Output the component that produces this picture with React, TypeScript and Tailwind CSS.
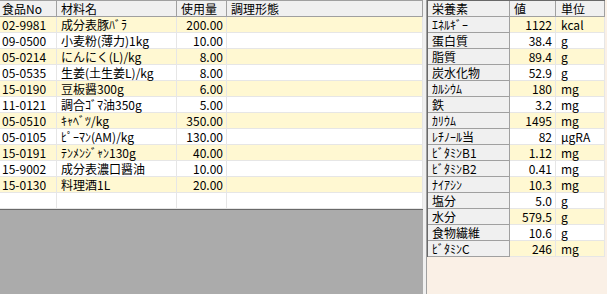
import React from 'react'

const materials = [
    ['02-9981', '成分表豚ﾊﾞﾗ', '200.00'],
    ['09-0500', '小麦粉(薄力)1kg', '10.00'],
    ['05-0214', 'にんにく(L)/kg', '8.00'],
    ['05-0535', '生姜(土生姜L)/kg', '8.00'],
    ['15-0190', '豆板醤300g', '6.00'],
    ['11-0121', '調合ｺﾞﾏ油350g', '5.00'],
    ['05-0510', 'ｷｬﾍﾞﾂ/kg', '350.00'],
    ['05-0105', 'ﾋﾟｰﾏﾝ(AM)/kg', '130.00'],
    ['15-0191', 'ﾃﾝﾒﾝｼﾞｬﾝ130g', '40.00'],
    ['15-9002', '成分表濃口醤油', '10.00'],
    ['15-0130', '料理酒1L', '20.00'],
    ['', '', ''],
]

const nutrients = [
    ['ｴﾈﾙｷﾞｰ', '1122', 'kcal'],
    ['蛋白質', '38.4', 'g'],
    ['脂質', '89.4', 'g'],
    ['炭水化物', '52.9', 'g'],
    ['ｶﾙｼｳﾑ', '180', 'mg'],
    ['鉄', '3.2', 'mg'],
    ['ｶﾘｳﾑ', '1495', 'mg'],
    ['ﾚﾁﾉｰﾙ当', '82', 'μgRA'],
    ['ﾋﾞﾀﾐﾝB1', '1.12', 'mg'],
    ['ﾋﾞﾀﾐﾝB2', '0.41', 'mg'],
    ['ﾅｲｱｼﾝ', '10.3', 'mg'],
    ['塩分', '5.0', 'g'],
    ['水分', '579.5', 'g'],
    ['食物繊維', '10.6', 'g'],
    ['ﾋﾞﾀﾐﾝC', '246', 'mg'],
]

const rowBg = (i: number) => (i % 2 === 0 ? 'bg-[#fff8d2]' : 'bg-white')

function MaterialGrid() {
    return (
        <div className="border-t border-[#a0a0a0] border-b border-b-[#696969] bg-white">
            <div className="grid h-[16px] grid-cols-[57px_120px_50px_1fr] bg-[#f0f0f0]">
                <div className="flex items-center border-r border-b border-[#a0a0a0] pl-[2px]">食品No</div>
                <div className="flex items-center border-r border-b border-[#a0a0a0] pl-[4px]">材料名</div>
                <div className="flex items-center border-r border-b border-[#a0a0a0] pl-[4px]">使用量</div>
                <div className="flex items-center border-r border-b border-[#a0a0a0] pl-[4px]">調理形態</div>
            </div>
            {materials.map((m, i) => (
                <div key={i} className={`grid h-[16px] grid-cols-[57px_120px_50px_1fr] ${rowBg(i)}`}>
                    <div className="flex items-center border-r border-b border-[#e6e6e6] pl-[2px]">{m[0]}</div>
                    <div className="flex items-center border-r border-b border-[#e6e6e6] pl-[4px] whitespace-nowrap">{m[1]}</div>
                    <div className="flex items-center justify-end border-r border-b border-[#e6e6e6] pr-[3px]">{m[2]}</div>
                    <div className="border-r border-b border-[#e6e6e6]" />
                </div>
            ))}
        </div>
    )
}

function NutrientGrid() {
    return (
        <div className="w-[178px] border-l border-t border-[#696969]">
            <div className="grid h-[16px] grid-cols-[82px_46px_49px] bg-[#f0f0f0]">
                <div className="flex items-center border-r border-b border-[#a0a0a0] pl-[4px]">栄養素</div>
                <div className="flex items-center border-r border-b border-[#a0a0a0] pl-[4px]">値</div>
                <div className="flex items-center border-r border-b border-[#a0a0a0] pl-[5px]">単位</div>
            </div>
            {nutrients.map((n, i) => (
                <div key={n[0]} className="grid h-[16px] grid-cols-[82px_46px_49px]">
                    <div className="flex items-center border-r border-b border-[#a0a0a0] bg-[#f0f0f0] pl-[4px] whitespace-nowrap">{n[0]}</div>
                    <div className={`flex items-center justify-end border-r border-b border-[#e6e6e6] pr-[3px] ${rowBg(i)}`}>{n[1]}</div>
                    <div className={`flex items-center border-r border-b border-[#e6e6e6] pl-[5px] ${rowBg(i)}`}>{n[2]}</div>
                </div>
            ))}
        </div>
    )
}

export default function App() {
    return (
        <div className="flex h-[294px] w-[607px] overflow-hidden bg-[#faf0e6] font-['Noto_Sans_CJK_JP',sans-serif] text-[12px] leading-[15px] text-black">
            <div className="flex w-[423px] flex-col bg-[#ababab]">
                <MaterialGrid />
            </div>
            <div className="w-[4px] border-r border-[#a0a0a0] bg-[#f0f0f0]" />
            <div className="flex-1">
                <NutrientGrid />
            </div>
        </div>
    )
}
